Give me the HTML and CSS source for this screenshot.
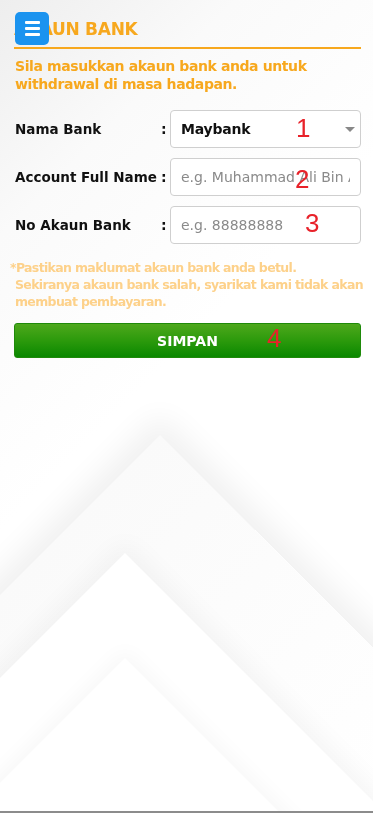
FILE: index.html
```html
<!DOCTYPE html>
<html>
    <head>
        <meta charset="UTF-8">
        <meta name="viewport" content="width=device-width, initial-scale=1.0">
        <title>Akaun Bank</title>
        <link rel="stylesheet" href="styles.css">
    </head>
    <body>
        <div class="backdrop">
            <div class="bg-shape shape-a"></div>
            <div class="bg-shape shape-b"></div>
            <div class="bg-shape shape-c"></div>
        </div>

        <div class="container">
            <div class="title-bar">
                <button class="menu-button" aria-label="Menu">
                    <span></span><span></span><span></span>
                </button>
                <h1>AKAUN BANK</h1>
            </div>

            <p class="intro">Sila masukkan akaun bank anda untuk withdrawal di masa hadapan.</p>

            <form class="bank-form">
                <div class="form-row">
                    <label for="bank">Nama Bank</label>
                    <span class="colon">:</span>
                    <div class="select-wrap">
                        <select id="bank">
                            <option>Maybank</option>
                            <option>CIMB Bank</option>
                            <option>Public Bank</option>
                        </select>
                    </div>
                    <span class="mark mark-1">1</span>
                </div>

                <div class="form-row">
                    <label for="fullname">Account Full Name</label>
                    <span class="colon">:</span>
                    <input id="fullname" type="text" placeholder="e.g. Muhammad Ali Bin Abu">
                    <span class="mark mark-2">2</span>
                </div>

                <div class="form-row">
                    <label for="account">No Akaun Bank</label>
                    <span class="colon">:</span>
                    <input id="account" type="text" placeholder="e.g. 88888888">
                    <span class="mark mark-3">3</span>
                </div>

                <p class="note">*Pastikan maklumat akaun bank anda betul.<br><span>Sekiranya akaun bank salah, syarikat kami tidak akan membuat pembayaran.</span></p>

                <div class="submit-wrap">
                    <button type="button" class="save-button">SIMPAN</button>
                    <span class="mark mark-4">4</span>
                </div>
            </form>
        </div>
    </body>
</html>
```

FILE: styles.css
```css
html, body {
    height: 100%;
}

body {
    margin: 0;
    font-family: "DejaVu Sans", "Noto Sans", sans-serif;
    background-color: #ffffff;
    border-bottom: 2px solid #8c8c8c;
    box-sizing: border-box;
    position: relative;
}

/* soft folded-paper shapes behind the page */
.backdrop {
    position: fixed;
    top: 0;
    left: 0;
    right: 0;
    bottom: 2px;
    overflow: hidden;
    background: linear-gradient(135deg, #eeeeee 0%, #fafafa 20%, #ffffff 45%);
}

.bg-shape {
    position: absolute;
    width: 420px;
    height: 420px;
    transform: rotate(45deg);
    background: linear-gradient(90deg, #fafafa, #ffffff);
    box-shadow: -14px -14px 30px rgba(0, 0, 0, 0.06);
}

.shape-a {
    left: -50px;
    top: 522px;
}

.shape-b {
    left: -85px;
    top: 640px;
    background: #ffffff;
    box-shadow: -8px -8px 24px rgba(0, 0, 0, 0.04);
}

.shape-c {
    left: -85px;
    top: 745px;
    background: #ffffff;
    box-shadow: -6px -6px 20px rgba(0, 0, 0, 0.03);
}

.container {
    position: relative;
    z-index: 1;
    padding: 12px 12px 0 14px;
}

.title-bar {
    position: relative;
    border-bottom: 2px solid #f7a81e;
    padding: 7px 0 8px;
}

h1 {
    margin: 0;
    font-size: 17px;
    font-weight: 600;
    color: #f7a81e;
    letter-spacing: -0.3px;
}

.menu-button {
    position: absolute;
    left: 1px;
    top: 0;
    width: 34px;
    height: 33px;
    border: none;
    border-radius: 5px;
    background-color: #1b93ef;
    display: flex;
    flex-direction: column;
    justify-content: center;
    align-items: center;
    gap: 3px;
    padding: 0;
    cursor: pointer;
}

.menu-button span {
    display: block;
    width: 15px;
    height: 3px;
    border-radius: 1px;
    background-color: #ffffff;
}

.intro {
    margin: 8px 0 0 1px;
    font-size: 14px;
    font-weight: 600;
    line-height: 18px;
    letter-spacing: -0.4px;
    color: #f7a81e;
}

.bank-form {
    margin-top: 17px;
    display: flex;
    flex-direction: column;
    gap: 10px;
}

.form-row {
    position: relative;
    display: flex;
    align-items: center;
    padding-left: 1px;
}

.form-row label {
    width: 146px;
    font-size: 13.5px;
    font-weight: 600;
    color: #111111;
}

.colon {
    width: 9px;
    font-size: 14px;
    font-weight: 600;
    color: #111111;
}

.select-wrap {
    position: relative;
    flex: 1;
}

.select-wrap::after {
    content: "";
    position: absolute;
    right: 6px;
    top: 17px;
    border-left: 5px solid transparent;
    border-right: 5px solid transparent;
    border-top: 5px solid #888888;
    pointer-events: none;
}

select,
input {
    box-sizing: border-box;
    height: 38px;
    width: 100%;
    border: 1px solid #cfcfcf;
    border-radius: 4px;
    background-color: #ffffff;
    font-family: inherit;
    font-size: 14px;
    padding: 0 10px;
    color: #111111;
}

select {
    appearance: none;
    font-weight: 600;
    letter-spacing: -0.2px;
}

input {
    flex: 1;
    width: auto;
    min-width: 0;
}

input::placeholder {
    color: #8a8a8a;
}

.note {
    margin: 5px -8px 0 -4px;
    font-size: 12.5px;
    font-weight: 600;
    line-height: 17px;
    letter-spacing: -0.65px;
    color: #fdd18a;
}

.note span {
    display: block;
    padding-left: 5px;
}

.submit-wrap {
    position: relative;
    margin-top: 3px;
}

.save-button {
    width: 100%;
    height: 35px;
    border: 1px solid #1f8a0a;
    border-radius: 3px;
    background: linear-gradient(180deg, #4ea81c 0%, #2c9a0c 50%, #0a8800 100%);
    color: #ffffff;
    font-family: inherit;
    font-size: 14px;
    font-weight: 700;
    cursor: pointer;
}

/* red numbered annotations */
.mark {
    position: absolute;
    font-family: "Liberation Sans", sans-serif;
    font-size: 26px;
    color: #e8222a;
    pointer-events: none;
}

.mark-1 { left: 282px; top: 3px; }
.mark-2 { left: 281px; top: 6px; }
.mark-3 { left: 291px; top: 2px; }
.mark-4 { left: 253px; top: 0; }
```
